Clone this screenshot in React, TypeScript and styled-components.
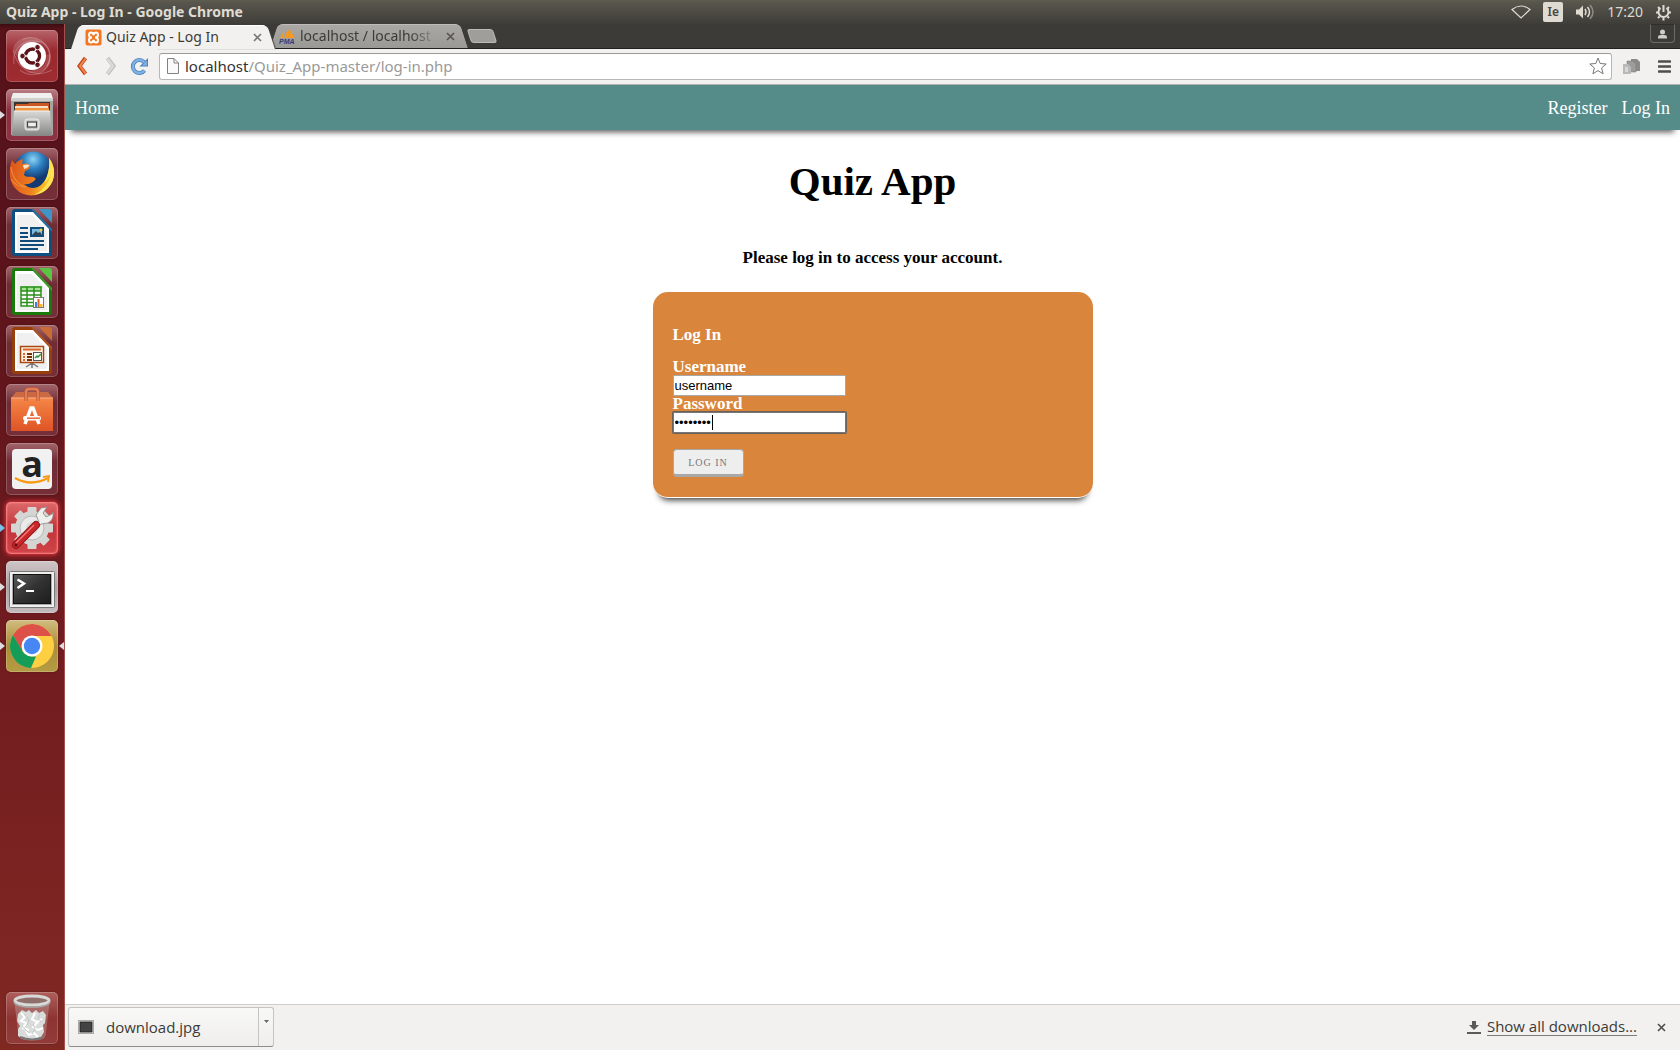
import React from 'react';
import styled, { createGlobalStyle, css } from 'styled-components';

const ui = '"Noto Sans", "Open Sans", sans-serif';
const serif = '"Liberation Serif", "Times New Roman", serif';

const GlobalStyle = createGlobalStyle`
  *, *::before, *::after { box-sizing: border-box; }
  body { margin: 0; background: #fff; font-family: ${ui}; }
  button { font: inherit; color: inherit; border: 0; padding: 0; background: none; }
`;

const Desktop = styled.div`
  display: flex;
  flex-direction: column;
  min-height: 100vh;
`;

/* ---------- top panel ---------- */
const Panel = styled.header`
  display: flex;
  align-items: center;
  justify-content: space-between;
  height: 24px;
  padding: 0 8px 0 6px;
  background: linear-gradient(#5f5d50 0, #57554c 3px, #3e3d38 100%);
  color: #dfdbd2;
  font-size: 14px;
  line-height: 24px;
`;
const WindowTitle = styled.span`
  font-weight: 700;
`;
const Indicators = styled.div`
  display: flex;
  align-items: center;
  gap: 12px;
  svg { display: block; }
`;
const Keyboard = styled.span`
  width: 20px;
  height: 20px;
  border-radius: 2px;
  background: #dfdbd2;
  color: #4a4944;
  font-size: 12px;
  font-weight: 600;
  line-height: 20px;
  text-align: center;
`;
const Clock = styled.time`
  font-size: 14px;
`;

const Workspace = styled.div`
  display: flex;
  flex: 1;
`;

/* ---------- launcher ---------- */
const Launcher = styled.nav`
  display: flex;
  flex-direction: column;
  gap: 7px;
  flex: none;
  width: 65px;
  padding: 6px;
  border-right: 1px solid #a3524b;
  background: linear-gradient(#3d0d10 0, #57121a 5px, #59131a 20%, #741d20 65%, #802923 100%);
`;
const tints = {
  plain: 'linear-gradient(#a3666c, #6f2c34 35%, #762f38)',
  ubuntu: 'linear-gradient(#b7656a, #99292e 40%, #9e2c31)',
  files: 'linear-gradient(#b98084, #8a2f3d 40%, #8f3342)',
  settings: 'linear-gradient(#dc6a6c, #c23439 50%, #d04448)',
  terminal: 'linear-gradient(#d0c6c8, #aaa0a2 50%, #c4bcbe)',
  chrome: 'linear-gradient(#d2bd80, #a98c36 50%, #b69b45)',
  trash: 'linear-gradient(#ae5f5c, #8d3431 50%, #923b39)',
};
const Tile = styled.button<{ $tint: keyof typeof tints; $glow?: boolean; $last?: boolean }>`
  position: relative;
  flex: none;
  width: 52px;
  height: 52px;
  border-radius: 5px;
  background: ${p => tints[p.$tint]};
  box-shadow: inset 0 0 0 1px rgba(255, 255, 255, 0.2), 0 0 2px rgba(0, 0, 0, 0.35);
  ${p => p.$glow && css`box-shadow: inset 0 0 2px 1px #f88, 0 0 4px 1px #e2343c;`}
  ${p => p.$last && css`margin-top: auto;`}
  svg { display: block; overflow: visible; }
`;
const Running = styled.i<{ $right?: boolean; $blue?: boolean }>`
  position: absolute;
  top: 22px;
  border: 4px solid transparent;
  ${p => p.$right
    ? css`right: -6px; border-left: 0; border-right: 5px solid #ddd;`
    : css`left: -6px; border-right: 0; border-left: 5px solid ${p.$blue ? '#76c3ee' : '#ddd'};`}
`;

/* ---------- browser chrome ---------- */
const Browser = styled.div`
  display: flex;
  flex-direction: column;
  flex: 1;
  min-width: 0;
`;
const TabStrip = styled.div`
  display: flex;
  align-items: flex-end;
  gap: 3px;
  height: 25px;
  padding: 0 5px 0 10px;
  background: #3c3b37;
  border-bottom: 1px solid #22211e;
`;
const Tab = styled.div<{ $active?: boolean }>`
  position: relative;
  z-index: ${p => (p.$active ? 2 : 1)};
  display: flex;
  align-items: center;
  gap: 4px;
  width: ${p => (p.$active ? 196 : 190)}px;
  height: 24px;
  padding: ${p => (p.$active ? '0 6px 0 10px' : '0 6px 0 5px')};
  margin-bottom: ${p => (p.$active ? -1 : 0)}px;
  isolation: isolate;
  &::before, &::after {
    content: '';
    position: absolute;
    z-index: -1;
    top: 0;
    bottom: 0;
    width: 60%;
    background: ${p => (p.$active ? '#f2f1f0' : 'linear-gradient(#aaa8a5, #9b9995)')};
    border-top: 1px solid ${p => (p.$active ? '#fff' : '#bebcb8')};
  }
  &::before { left: 0; transform: skewX(-18deg); border-radius: 5px 0 0 0; }
  &::after { right: 0; transform: skewX(18deg); border-radius: 0 5px 0 0; ${p => p.$active && 'box-shadow: 1px 0 1px #45443f;'} }
  svg { flex: none; display: block; }
`;
const TabLabel = styled.button<{ $fade?: boolean }>`
  flex: 1;
  overflow: hidden;
  text-align: left;
  white-space: nowrap;
  font-size: 14px;
  line-height: 22px;
  color: #3c3b37;
  ${p => p.$fade && css`mask-image: linear-gradient(90deg, #000 80%, transparent);`}
`;
const CloseButton = styled.button`
  display: grid;
  place-items: center;
  flex: none;
  width: 16px;
  height: 16px;
`;
const NewTab = styled.button`
  align-self: center;
  width: 26px;
  height: 14px;
  margin-left: 2px;
  border: 1px solid #bdbbb8;
  border-radius: 3px;
  background: #a09e9b;
  transform: skewX(18deg);
`;
const UserButton = styled.button`
  display: grid;
  place-items: center;
  align-self: flex-start;
  width: 25px;
  height: 19px;
  margin-left: auto;
  border: 1px solid #6c6b67;
  border-top-color: #302f2c;
  border-radius: 0 0 4px 4px;
`;
const Toolbar = styled.div`
  display: flex;
  align-items: center;
  gap: 10px;
  height: 36px;
  padding: 0 6px 1px 7px;
  background: #f2f1f0;
  border-bottom: 1px solid #b4b2af;
`;
const ToolGroup = styled.div`
  display: flex;
  gap: 14px;
`;
const ToolButton = styled.button`
  display: grid;
  place-items: center;
  width: 19px;
  height: 22px;
  svg { display: block; }
`;
const Omnibox = styled.div`
  display: flex;
  align-items: center;
  flex: 1;
  gap: 6px;
  height: 27px;
  padding: 0 4px 0 7px;
  border: 1px solid #b9b7b4;
  border-top-color: #9c9a97;
  border-radius: 3px;
  background: #fff;
`;
const Address = styled.div`
  flex: 1;
  font-size: 15px;
  line-height: 22px;
  color: #9a9a9a;
  b { font-weight: 400; color: #333; }
`;

/* ---------- web page ---------- */
const Page = styled.div`
  display: flex;
  flex-direction: column;
  align-items: center;
  flex: 1;
  background: #fff;
  font-family: ${serif};
`;
const SiteNav = styled.nav`
  display: flex;
  align-self: stretch;
  align-items: center;
  gap: 14px;
  height: 45px;
  padding: 0 10px;
  background: #558c89;
  box-shadow: 0 8px 6px -6px #555;
`;
const NavLink = styled.a<{ $first?: boolean }>`
  color: #fff;
  font-size: 18px;
  line-height: 20px;
  text-decoration: none;
  ${p => p.$first && css`margin-right: auto;`}
`;
const Title = styled.h1`
  margin: 23px 0 0;
  font-size: 41px;
  line-height: 56px;
`;
const Hint = styled.p`
  margin: 39px 0 0;
  font-size: 17px;
  font-weight: 700;
  line-height: 20px;
`;
const Card = styled.form`
  display: flex;
  flex-direction: column;
  align-items: flex-start;
  width: 440px;
  margin-top: 24px;
  padding: 33px 20px 20px;
  border-bottom: 1px solid #fff;
  border-radius: 15px;
  background: #d9853b;
  box-shadow: 0 8px 6px -6px #333;
  color: #fff;
`;
const Legend = styled.h2`
  margin: 0 0 14px;
  font-size: 17px;
  line-height: 20px;
`;
const Label = styled.label`
  font-size: 17px;
  font-weight: 700;
  line-height: 16px;
`;
const Field = styled.div`
  position: relative;
  display: flex;
`;
const TextInput = styled.input<{ $focused?: boolean }>`
  width: 173px;
  height: 21px;
  padding: 1px;
  border: 1px solid #a9a9a9;
  background: #fff;
  color: #000;
  font: 13px "Liberation Sans", Arial, sans-serif;
  outline: none;
  ${p => p.$focused && css`
    border-color: #777;
    caret-color: transparent;
    box-shadow: 0 0 0 1px #6b6159;
    border-radius: 1px;
  `}
`;
const Caret = styled.i`
  position: absolute;
  top: 3px;
  left: 39px;
  width: 1px;
  height: 15px;
  background: #000;
`;
const Submit = styled.button`
  width: 71px;
  height: 28px;
  margin-top: 16px;
  border: 1px solid #a8a8a8;
  border-bottom-width: 3px;
  border-radius: 4px;
  background: #eee;
  color: #777;
  font-family: ${serif};
  font-size: 10px;
  letter-spacing: 1px;
  text-transform: uppercase;
`;

/* ---------- download shelf ---------- */
const Shelf = styled.footer`
  display: flex;
  align-items: center;
  height: 46px;
  padding: 0 11px 1px 3px;
  border-top: 1px solid #cfcecc;
  background: #f2f1f0;
  color: #3c3b37;
  font-family: "Open Sans", "Noto Sans", sans-serif;
  font-size: 15px;
`;
const Download = styled.div`
  display: flex;
  width: 206px;
  height: 40px;
  border: 1px solid #c6c4c1;
  border-bottom-color: #8f8d8a;
  border-radius: 3px;
  background: linear-gradient(#f8f8f7, #efeeed);
`;
const DownloadName = styled.button`
  display: flex;
  align-items: center;
  flex: 1;
  gap: 12px;
  padding-left: 9px;
`;
const DownloadMenu = styled.button`
  display: flex;
  justify-content: center;
  width: 15px;
  padding-top: 12px;
  border-left: 1px solid #c6c4c1;
`;
const ShowAll = styled.a`
  display: flex;
  align-items: center;
  gap: 6px;
  margin: 0 16px 0 auto;
  color: #3c3b37;
  text-decoration: none;
  span { border-bottom: 1px solid #7d7c79; line-height: 17px; }
`;

/* ---------- drawings ---------- */
const Cross = ({ color = '#777' }: { color?: string }) => (
  <svg width="9" height="9" viewBox="0 0 9 9"><path d="M1 1 8 8M8 1 1 8" stroke={color} strokeWidth="1.6" /></svg>
);
const Svg = ({ children }: { children: React.ReactNode }) => (
  <svg width="52" height="52" viewBox="0 0 52 52" aria-hidden="true">{children}</svg>
);

const UbuntuIcon = () => (
  <Svg>
    <g fill="none" stroke="#fff" strokeOpacity=".22" strokeWidth="1.2">
      <path d="M8 34C5 18 20 6 37 13c8 5 9 14 4 23" /><path d="M17 9c18-7 32 12 25 26-5 10-18 13-28 5" /><path d="M7 20c4 18 19 30 39 20" />
    </g>
    <path d="M7 20C8 8 24 3 36 12L26 13C17 13 11 20 13 30Z" fill="#fff" opacity=".16" />
    <path d="M44 24c4 14-10 22-24 18l8-2c9-1 14-8 12-15Z" fill="#fff" opacity=".14" />
    <circle cx="26" cy="26" r="14" fill="#fff" />
    <circle cx="26.500" cy="26" r="7" fill="none" stroke="#5b1418" strokeWidth="3.400" />
    <path d="M26 26H14M26 26l6-10M26 26l6 10" stroke="#fff" strokeWidth="1.400" />
    <circle cx="26.500" cy="26" r="5" fill="#fff" />
    <g fill="#5b1418" stroke="#fff" strokeWidth=".8"><circle cx="16.500" cy="26" r="2.700" /><circle cx="31.500" cy="17.200" r="2.700" /><circle cx="31.500" cy="34.800" r="2.700" /></g>
  </Svg>
);
const FilesIcon = () => (
  <Svg>
    <defs><linearGradient id="cab" x2="0" y2="1"><stop stopColor="#d9d9d7" /><stop offset="1" stopColor="#858583" /></linearGradient></defs>
    <path d="M7 4h38l2 6v36H5V10Z" fill="#a5a5a3" /><path d="M7 4h38l2 6H5Z" fill="#f0f0ee" /><path d="M5 9h42v3H5Z" fill="#cfcfcd" />
    <path d="M8 13h36v9H8Z" fill="#393532" />
    <path d="M10 15h12l1-1h20v8H9Z" fill="#c95623" /><path d="M9 17h33v2H9Z" fill="#f7e2c9" /><path d="M9 19h34v3H9Z" fill="#f0953d" />
    <path d="M8 22h36l2 25H6Z" fill="url(#cab)" /><path d="M8 22h36" stroke="#f4f4f2" />
    <rect x="19" y="30" width="14" height="11" rx="2" fill="#c9c9c7" stroke="#eee" /><rect x="21.500" y="33" width="9" height="5" fill="#efefed" stroke="#444" strokeWidth="1.200" />
  </Svg>
);
const FirefoxIcon = () => (
  <Svg>
    <defs>
      <radialGradient id="globe" cx=".5" cy=".2"><stop stopColor="#8ed5f5" /><stop offset=".5" stopColor="#2b7fc0" /><stop offset="1" stopColor="#153a73" /></radialGradient>
      <linearGradient id="fox" x2="1" y2=".2"><stop stopColor="#d9521c" /><stop offset=".6" stopColor="#ee7c1f" /><stop offset="1" stopColor="#fbd22c" /></linearGradient>
    </defs>
    <circle cx="27" cy="23" r="19.500" fill="url(#globe)" />
    <path d="M43 10c7 9 7 22-1 30-8 9-23 10-31 2C3 35 2 23 6 12l3 4c2-3 5-4 8-5l-1 5c3-1 6 0 8 1 1 3-2 5-5 6l-1 4c3 3 6 1 9 2s3 2 2 3c-4 4-8 5-11 4 5 5 12 5 17 1 7-6 9-15 8-27Z" fill="url(#fox)" />
    <path d="M43 10c7 9 7 22-1 30-4 4-9 6-14 7 10-5 15-12 17-21-2 4-4 7-7 9 4-8 6-15 5-25Z" fill="#fde254" />
    <path d="M5 19c1 9 6 17 15 20-7 0-12-3-15-8" fill="none" stroke="#f49a3c" strokeWidth="1.300" opacity=".7" />
    <path d="M17 17q4-1 7 0-2 3-6 4Z" fill="#f7e5c5" />
  </Svg>
);
const DocIcon = ({ dark, light, children }: { dark: string; light: string; children: React.ReactNode }) => (
  <Svg>
    <path d="M9 2h18l19 20v24q0 3-3 3H9q-3 0-3-3V5q0-3 3-3Z" fill={dark} />
    <path d="M9 5h18l16 17v24H9Z" fill="#fff" /><path d="M11 8h15l15 16v20H11Z" fill="#f0f0f0" />
    <path d="M27 2 46 22V25L25 2Z" fill={light} opacity=".5" />
    <path d="M33 2h10q3 0 3 3v11Z" fill={light} />
    {children}
  </Svg>
);
const WriterIcon = () => (
  <DocIcon dark="#0d4f80" light="#3f94c8">
    <path d="M14 21h8M14 26h8M14 30h8M14 34h24M14 38h24M14 42h18" stroke="#0f4c7b" strokeWidth="2" />
    <rect x="25" y="21" width="12" height="8" fill="#79bae2" stroke="#0f4c7b" strokeWidth="2" /><path d="m26 28 4-4 2 2 2-1 2 3Z" fill="#33414a" /><circle cx="35" cy="23" r="1.500" fill="#f1cf40" />
  </DocIcon>
);
const CalcIcon = () => (
  <DocIcon dark="#177a09" light="#5cc443">
    <path d="M14 20h22v21H14Z" fill="#fff" /><path d="M14 20h22v5H14Z" fill="#a6e390" />
    <path d="M15 21h20v19H15ZM15 25h20M15 29h20M15 33h20M15 36.500h20M21 21v19M28 21v19" fill="none" stroke="#2a901b" strokeWidth="1.500" />
    <rect x="27.500" y="31.500" width="10" height="10" fill="#fff" stroke="#777" /><path d="M29 36h2v5h-2Z" fill="#3687c8" /><path d="M31.500 33h2v8h-2Z" fill="#e45c22" /><path d="M34 38h2.500v3H34Z" fill="#f5bd28" />
  </DocIcon>
);
const ImpressIcon = () => (
  <DocIcon dark="#963f0b" light="#c86d35">
    <path d="M26 38v5M26 38l-6 4M26 38l6 4" stroke="#777" strokeWidth="1.500" />
    <rect x="14.500" y="21.500" width="23" height="16" fill="#fff3e8" stroke="#a84712" strokeWidth="1.500" /><path d="M17 24.500h18" stroke="#d6682b" strokeWidth="2" />
    <path d="M17 29h2M17 32h2M17 35h2" stroke="#d6682b" strokeWidth="2" /><path d="M21 29h5M21 32h5M21 35h5" stroke="#783006" strokeWidth="2" />
    <rect x="27.500" y="27.500" width="8" height="8" fill="#fff" stroke="#555" /><path d="m29 33 2-2 1 1 3-3" stroke="#329632" strokeWidth="1.500" fill="none" />
  </DocIcon>
);
const SoftwareIcon = () => (
  <Svg>
    <defs><linearGradient id="bag" x2="0" y2="1"><stop stopColor="#f58646" /><stop offset="1" stopColor="#df5426" /></linearGradient></defs>
    <path d="m10 8-5 6h42l-5-6Z" fill="#c96a43" /><path d="M5 14h42v33H5Z" fill="url(#bag)" /><path d="M5 14h42" stroke="#fbb18c" />
    <path d="M20 17V8q0-3 3-3h6q3 0 3 3v9" fill="none" stroke="#c85a36" strokeWidth="3.500" /><path d="M20 17V8q0-3 3-3h6q3 0 3 3v9" fill="none" stroke="#e58a65" strokeWidth="1.500" />
    <path d="m19 40 6-16h2l6 16" fill="none" stroke="#fff" strokeWidth="3.500" /><rect x="17" y="32" width="18" height="4.500" rx="2" fill="#fff" /><path d="M21 34.200h13" stroke="#ec6733" strokeWidth="1.500" />
  </Svg>
);
const AmazonIcon = () => (
  <Svg>
    <rect x="6" y="6" width="40" height="40" rx="4" fill="#f1f1f1" />
    <text x="26" y="34" textAnchor="middle" fontFamily="Open Sans, sans-serif" fontWeight="700" fontSize="36" fill="#222">a</text>
    <path d="M9 35q16 9 33 0" fill="none" stroke="#f79a18" strokeWidth="2.500" /><path d="m37 34 6-1-1 6" fill="none" stroke="#f79a18" strokeWidth="1.800" />
  </Svg>
);
const SettingsIcon = () => (
  <Svg>
    <g fill="#d5d5d3">
      <circle cx="26" cy="26" r="17" />
      {[0, 45, 90, 135].map(a => <rect key={a} x="21.500" y="5" width="9" height="42" rx="1" transform={`rotate(${a} 26 26)`} />)}
    </g>
    <circle cx="26" cy="26" r="12" fill="#eaeaea" stroke="#b8b8b6" /><circle cx="26" cy="26" r="6" fill="#d8d8d6" />
    <path d="M33 20 30 13l5-7 6-1-4 6 3 4 6-3 1-2q1 8-5 11l-7 1-4 4-3-3Z" fill="#efefed" stroke="#888" strokeWidth=".8" />
    <path d="m10 43 20-20" stroke="#8f181b" strokeWidth="8" strokeLinecap="round" /><path d="m10 43 20-20" stroke="#cb272a" strokeWidth="6" strokeLinecap="round" /><path d="m10 41 18-18" stroke="#f07b76" strokeWidth="1.500" /><circle cx="10" cy="43" r="1.500" fill="#5e1013" />
  </Svg>
);
const TerminalIcon = () => (
  <Svg>
    <defs><linearGradient id="term" x2="1" y2="1"><stop stopColor="#5b5b5b" /><stop offset=".5" stopColor="#323232" /><stop offset="1" stopColor="#1d1d1d" /></linearGradient></defs>
    <rect x="3.500" y="10.500" width="45" height="36" rx="1" fill="#efefef" stroke="#777" /><rect x="6" y="13" width="40" height="31" fill="#aaa" /><rect x="7.500" y="13.500" width="37" height="29" fill="url(#term)" stroke="#111" />
    <path d="m11.500 18.500 6.500 4-6.500 4.500" fill="none" stroke="#fff" strokeWidth="2.500" /><path d="M20 30h8" stroke="#fff" strokeWidth="2" />
  </Svg>
);
const ChromeIcon = () => (
  <Svg>
    <circle cx="26" cy="26" r="22" fill="#fdcf41" />
    <path d="M26 16h19.600A22 22 0 0 0 6.950 15L16 31Z" fill="#dd5148" />
    <path d="M6.950 15 17 32q4 5 13 4.500L25 48A22 22 0 0 1 6.950 15Z" fill="#149d59" />
    <circle cx="26" cy="26" r="10.500" fill="#fff" /><circle cx="26" cy="26" r="8.200" fill="#4687f4" />
  </Svg>
);
const TrashIcon = () => (
  <Svg>
    <path d="M9 10h34l-4 34q-1 4-13 4t-13-4Z" fill="#ddd" opacity=".25" stroke="#eee" />
    <path d="m12 22 4-4 4 2 3-2 3 3 4-3 3 3 4-2 3 4-1 8-2 2 1 7-3 5-9 3-9-1-5-3v-7l2-3-3-5Z" fill="#d9dcd9" />
    <path d="m15 21 4 4-4 4 5 2-3 5 6 2M29 21l-3 6 5 3 5-3M32 30l-5 5 5 3 5-2M20 39l3 4 5-2 4 4" fill="none" stroke="#fff" strokeWidth="2" /><path d="m18 22 5 6-2 5M34 22l-2 5 4 3M16 34l7 7M27 32l2 5-3 5" fill="none" stroke="#c3c8c4" />
    <path d="M14 45q12 5 24 0" fill="none" stroke="#777" strokeWidth="2" />
    <ellipse cx="26" cy="8.500" rx="17" ry="4.500" fill="#8f706d" stroke="#d8dad7" strokeWidth="3" /><path d="M8 10q2 5 18 5t18-5" fill="none" stroke="#a7aaa7" strokeWidth="1.500" />
  </Svg>
);

const App = () => (
  <Desktop>
    <GlobalStyle />
    <Panel>
      <WindowTitle>Quiz App - Log In - Google Chrome</WindowTitle>
      <Indicators>
        <svg width="20" height="14" viewBox="0 0 20 14"><path d="M1 4.500Q10-2.500 19 4.500L10 13Z" fill="none" stroke="#dfdbd2" strokeWidth="1.200" /></svg>
        <Keyboard>Ie</Keyboard>
        <svg width="20" height="16" viewBox="0 0 20 16" fill="none" stroke="#dfdbd2"><path d="M1 5.500h3l4-4v13l-4-4H1Z" fill="#dfdbd2" stroke="none" /><path d="M10 5q2 3 0 6M12.500 3q4 5 0 10" strokeWidth="1.500" /><path d="M15 1q6 7 0 14" strokeWidth="1.500" opacity=".45" /></svg>
        <Clock>17:20</Clock>
        <svg width="17" height="17" viewBox="0 0 17 17" fill="none" stroke="#dfdbd2"><path d="M5.500 4A5 5 0 1 0 11.500 4" strokeWidth="2" /><path d="M8.500 1v7" strokeWidth="2" /><path d="M1 8.500h2M14 8.500h2M8.500 14v2.500M3 3l1.500 1.500M14 3l-1.500 1.500M3 14l1.500-1.500M14 14l-1.500-1.500" strokeWidth="2" /></svg>
      </Indicators>
    </Panel>
    <Workspace>
      <Launcher aria-label="Launcher">
        <Tile $tint="ubuntu" aria-label="Search"><UbuntuIcon /></Tile>
        <Tile $tint="files" aria-label="Files"><FilesIcon /><Running /></Tile>
        <Tile $tint="plain" aria-label="Firefox"><FirefoxIcon /></Tile>
        <Tile $tint="plain" aria-label="Writer"><WriterIcon /></Tile>
        <Tile $tint="plain" aria-label="Calc"><CalcIcon /></Tile>
        <Tile $tint="plain" aria-label="Impress"><ImpressIcon /></Tile>
        <Tile $tint="plain" aria-label="Software Centre"><SoftwareIcon /></Tile>
        <Tile $tint="plain" aria-label="Amazon"><AmazonIcon /></Tile>
        <Tile $tint="settings" $glow aria-label="Settings"><SettingsIcon /><Running $blue /></Tile>
        <Tile $tint="terminal" aria-label="Terminal"><TerminalIcon /><Running /></Tile>
        <Tile $tint="chrome" aria-label="Chrome"><ChromeIcon /><Running /><Running $right /></Tile>
        <Tile $tint="trash" $last aria-label="Rubbish Bin"><TrashIcon /></Tile>
      </Launcher>
      <Browser>
        <TabStrip>
          <Tab $active>
            <svg width="17" height="17" viewBox="0 0 17 17"><rect x=".5" y=".5" width="16" height="16" rx="2" fill="#f37623" /><path d="M7 8.500Q4 8.500 4 6t2-2.500 2.500 2.500Q9 3.500 11 3.500T13 6t-3 2.500q3 0 3 2.500t-2 2.500T8.500 11Q8 13.500 6 13.500T4 11t3-2.500Z" fill="none" stroke="#fff" strokeWidth="2" /></svg>
            <TabLabel>Quiz App - Log In</TabLabel>
            <CloseButton aria-label="Close tab"><Cross /></CloseButton>
          </Tab>
          <Tab>
            <svg width="17" height="17" viewBox="0 0 17 17"><path d="M1 10 5 3v7ZM5.500 10 9 0l2 10ZM11 10V2l5 8Z" fill="#f59a20" /><text x="0" y="16" fontFamily="Liberation Sans" fontSize="7" fontWeight="700" fontStyle="italic" fill="#343b7c">PMA</text></svg>
            <TabLabel $fade>localhost / localhost</TabLabel>
            <CloseButton aria-label="Close tab"><Cross color="#57534f" /></CloseButton>
          </Tab>
          <NewTab aria-label="New tab" />
          <UserButton aria-label="Profile"><svg width="11" height="10" viewBox="0 0 11 10" fill="#d0cec9"><circle cx="5.500" cy="3" r="2.500" /><path d="M1 9.500V8q0-2 2.500-2h4Q10 6 10 8v1.500Z" /></svg></UserButton>
        </TabStrip>
        <Toolbar>
          <ToolButton aria-label="Back"><svg width="12" height="20" viewBox="0 0 12 20"><path d="m9.500 2-6 8 6 8" fill="none" stroke="#c6461c" strokeWidth="4" /><path d="m9.500 2.500-5.500 7.500 5.500 7.500" fill="none" stroke="#ef8a4c" strokeWidth="2" /></svg></ToolButton>
          <ToolButton aria-label="Forward"><svg width="12" height="20" viewBox="0 0 12 20"><path d="m2.500 2 6 8-6 8" fill="none" stroke="#bfbdbb" strokeWidth="4" /><path d="m2.500 2.500 5.500 7.500-5.500 7.500" fill="none" stroke="#dbdad8" strokeWidth="2.400" /></svg></ToolButton>
          <ToolButton aria-label="Reload"><svg width="19" height="19" viewBox="0 0 19 19"><path d="M14.500 13.500A6.500 6.500 0 1 1 14 5" fill="none" stroke="#4a82bd" strokeWidth="4" /><path d="M18 1v8.500H9.500Z" fill="#4a82bd" /><path d="M14.500 13.500A6.500 6.500 0 1 1 14.500 5.500" fill="none" stroke="#7fb1e2" strokeWidth="2.400" /><path d="M17 3.500V8.500h-5Z" fill="#7fb1e2" /></svg></ToolButton>
          <Omnibox>
            <svg width="12" height="16" viewBox="0 0 12 16"><path d="M.5.5H7L11.500 5v10.500H.5Z" fill="#fafafa" stroke="#828282" /><path d="M7 .5V5h4.500" fill="none" stroke="#828282" /></svg>
            <Address><b>localhost</b>/Quiz_App-master/log-in.php</Address>
            <svg width="18" height="18" viewBox="0 0 18 18"><path d="m9 1 2.200 5.500 6 .5-4.600 3.900 1.500 5.900L9 13.600l-5.100 3.200 1.500-5.900L.8 7l6-.5Z" fill="#fff" stroke="#777" strokeLinejoin="round" /></svg>
          </Omnibox>
          <ToolGroup>
            <ToolButton aria-label="Extension"><svg width="17" height="17" viewBox="0 0 17 17"><path d="M8 1h6l3 3v9H8Z" fill="#8a8a8a" /><path d="M4 3h6l3 3v8H4Z" fill="#9c9c9c" stroke="#777" strokeWidth=".5" /><path d="M0 6h5l3 3v7H0Z" fill="#b9b9b9" /><path d="M2 9h3v5H2Z" fill="#d7d7d7" /></svg></ToolButton>
            <ToolButton aria-label="Menu"><svg width="13" height="13" viewBox="0 0 13 13"><path d="M1 1.500h11M1 6.500h11M1 11.500h11" stroke="#4d4d4d" strokeWidth="2.600" strokeLinecap="round" /></svg></ToolButton>
          </ToolGroup>
        </Toolbar>
        <Page>
          <SiteNav>
            <NavLink href="#home" $first>Home</NavLink>
            <NavLink href="#register">Register</NavLink>
            <NavLink href="#login">Log In</NavLink>
          </SiteNav>
          <Title>Quiz App</Title>
          <Hint>Please log in to access your account.</Hint>
          <Card onSubmit={e => e.preventDefault()}>
            <Legend>Log In</Legend>
            <Label htmlFor="username">Username</Label>
            <Field><TextInput id="username" type="text" defaultValue="username" /></Field>
            <Label htmlFor="password">Password</Label>
            <Field><TextInput id="password" type="password" defaultValue="password" $focused /><Caret /></Field>
            <Submit type="submit">Log In</Submit>
          </Card>
        </Page>
        <Shelf>
          <Download>
            <DownloadName>
              <svg width="16" height="14" viewBox="0 0 16 14"><rect x=".5" y=".5" width="15" height="13" fill="#fff" stroke="#aaa" /><rect x="2" y="2" width="12" height="10" fill="#444" stroke="#222" /></svg>
              download.jpg
            </DownloadName>
            <DownloadMenu aria-label="Download options"><svg width="5" height="3" viewBox="0 0 5 3"><path d="M0 0h5L2.500 3Z" fill="#666" /></svg></DownloadMenu>
          </Download>
          <ShowAll href="#downloads">
            <svg width="14" height="13" viewBox="0 0 14 13" fill="#5b5a57"><path d="M5 0h4v4h3L7 9 2 4h3ZM0 11h14v2H0Z" /></svg>
            <span>Show all downloads...</span>
          </ShowAll>
          <CloseButton aria-label="Close downloads"><Cross color="#4d4c48" /></CloseButton>
        </Shelf>
      </Browser>
    </Workspace>
  </Desktop>
);

export default App;
